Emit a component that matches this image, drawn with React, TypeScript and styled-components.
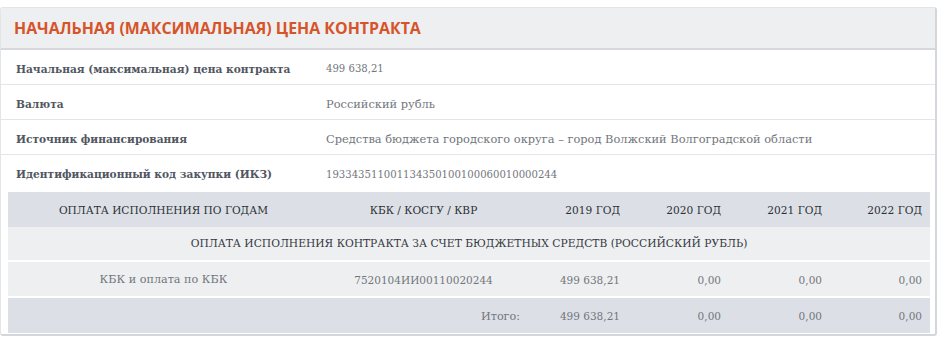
import styled, { createGlobalStyle } from 'styled-components';

const GlobalStyle = createGlobalStyle`
  *, *::before, *::after {
    box-sizing: border-box;
  }
  body {
    margin: 0;
    background: #ffffff;
    font-family: "DejaVu Serif", "Liberation Serif", serif;
  }
`;

type Align = 'left' | 'center' | 'right';

interface InfoItem {
  label: string;
  value: string;
  numeric?: boolean;
}

const infoItems: InfoItem[] = [
  { label: 'Начальная (максимальная) цена контракта', value: '499 638,21', numeric: true },
  { label: 'Валюта', value: 'Российский рубль' },
  {
    label: 'Источник финансирования',
    value: 'Средства бюджета городского округа – город Волжский Волгоградской области',
  },
  {
    label: 'Идентификационный код закупки (ИКЗ)',
    value: '193343511001134350100100060010000244',
    numeric: true,
  },
];

const columns: { title: string; width: number; align: Align }[] = [
  { title: 'Оплата исполнения по годам', width: 311, align: 'center' },
  { title: 'КБК / КОСГУ / КВР', width: 209, align: 'center' },
  { title: '2019 год', width: 100, align: 'right' },
  { title: '2020 год', width: 101, align: 'right' },
  { title: '2021 год', width: 101, align: 'right' },
  { title: '2022 год', width: 100, align: 'right' },
];

const years = ['499 638,21', '0,00', '0,00', '0,00'];

function ContractPrice() {
  return (
    <Card>
      <Header>
        <Title>Начальная (максимальная) цена контракта</Title>
      </Header>
      <InfoList>
        {infoItems.map((item) => (
          <InfoRow key={item.label}>
            <Label>{item.label}</Label>
            <Value $numeric={item.numeric}>{item.value}</Value>
          </InfoRow>
        ))}
      </InfoList>
      <TableWrap>
        <Table>
          <colgroup>
            {columns.map((col) => (
              <col key={col.title} style={{ width: col.width }} />
            ))}
          </colgroup>
          <thead>
            <tr>
              {columns.map((col) => (
                <HeadCell key={col.title} $align={col.align}>
                  {col.title}
                </HeadCell>
              ))}
            </tr>
          </thead>
          <tbody>
            <tr>
              <SectionCell colSpan={6}>
                Оплата исполнения контракта за счет бюджетных средств (Российский рубль)
              </SectionCell>
            </tr>
            <DataRow>
              <Cell $align="center">КБК и оплата по КБК</Cell>
              <Cell $align="center" $numeric>
                7520104ИИ00110020244
              </Cell>
              {years.map((sum, i) => (
                <Cell key={i} $align="right" $numeric>
                  {sum}
                </Cell>
              ))}
            </DataRow>
            <DataRow $total>
              <Cell $align="center" />
              <Cell $align="right">Итого:</Cell>
              {years.map((sum, i) => (
                <Cell key={i} $align="right" $numeric>
                  {sum}
                </Cell>
              ))}
            </DataRow>
          </tbody>
        </Table>
      </TableWrap>
    </Card>
  );
}

const Page = styled.div`
  padding: 7px 4px 9px 0;
`;

const Card = styled.section`
  border: 1px solid #e2e5e8;
  border-right: 2px solid #d3d7db;
  border-bottom: 2px solid #d3d7db;
  border-radius: 3px;
  overflow: hidden;
  background: #ffffff;
`;

const Header = styled.div`
  display: flex;
  align-items: center;
  height: 42px;
  padding-left: 13px;
  background: #eeeff1;
  border-bottom: 2px solid #d5d9dd;
`;

const Title = styled.h2`
  margin: 0;
  font-family: "Open Sans", "Noto Sans", sans-serif;
  font-size: 15.9px;
  font-weight: 700;
  text-transform: uppercase;
  color: #d6542a;
`;

const InfoList = styled.div`
  display: flex;
  flex-direction: column;
`;

const InfoRow = styled.div`
  display: grid;
  grid-template-columns: 310px 1fr;
  align-items: center;
  height: 35px;
  padding: 3px 0 0 15px;
  border-bottom: 1px solid #e3e5e8;
  &:last-child {
    border-bottom: none;
  }
`;

const Label = styled.span`
  font-size: 10.6px;
  font-weight: 700;
  color: #51565f;
`;

const Value = styled.span<{ $numeric?: boolean }>`
  font-size: ${({ $numeric }) => ($numeric ? '10.1px' : '11.4px')};
  color: #72767c;
`;

const TableWrap = styled.div`
  padding: 2px 5px 1px 7px;
`;

const Table = styled.table`
  width: 100%;
  border-collapse: collapse;
  table-layout: fixed;
`;

const HeadCell = styled.th<{ $align: Align }>`
  height: 35px;
  padding: 1px 8px 0;
  background: #dce0e6;
  font-size: 10.6px;
  font-weight: 400;
  text-transform: uppercase;
  text-align: ${({ $align }) => $align};
  color: #2c3035;
  white-space: nowrap;
`;

const SectionCell = styled.td`
  height: 34px;
  padding: 0;
  background: #eeeff1;
  font-size: 10.7px;
  text-transform: uppercase;
  text-align: center;
  color: #353940;
`;

const DataRow = styled.tr<{ $total?: boolean }>`
  border-top: 2px solid #ffffff;
  background: ${({ $total }) => ($total ? '#dce0e6' : '#eeeff1')};
`;

const Cell = styled.td<{ $align: Align; $numeric?: boolean }>`
  height: 36px;
  padding: 1px 8px 0;
  font-size: ${({ $numeric }) => ($numeric ? '10.5px' : '11.2px')};
  text-align: ${({ $align }) => $align};
  color: #72767c;
  white-space: nowrap;
`;

export default function App() {
  return (
    <>
      <GlobalStyle />
      <Page>
        <ContractPrice />
      </Page>
    </>
  );
}
